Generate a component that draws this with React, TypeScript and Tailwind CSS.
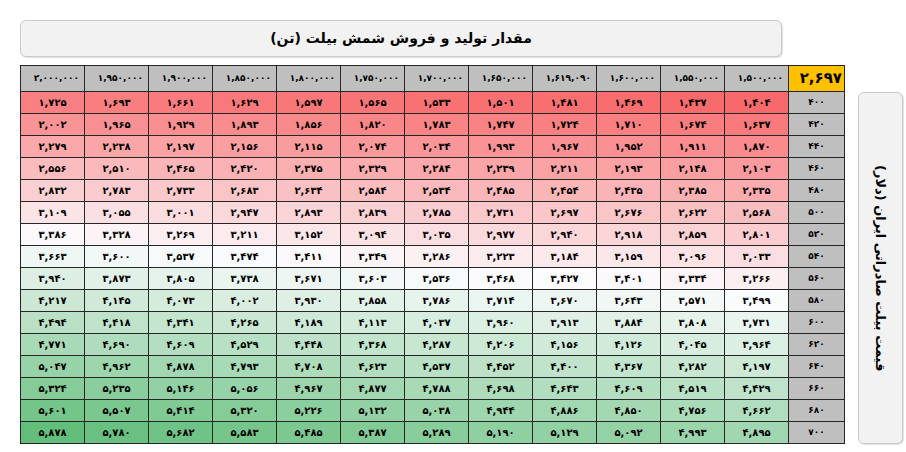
const FONT = "font-['DejaVu_Sans',sans-serif]";

// column prices, right to left (first column sits next to the row header)
const prices = [
  1500000, 1550000, 1600000, 1619090, 1650000, 1700000, 1750000, 1800000, 1850000, 1900000, 1950000,
  2000000,
];

// rows: export price (dollar) -> values in the same order as prices
const rows: Array<{ usd: number; values: number[] }> = [
  { usd: 400, values: [1404, 1437, 1469, 1481, 1501, 1533, 1565, 1597, 1629, 1661, 1693, 1725] },
  { usd: 420, values: [1637, 1674, 1710, 1724, 1747, 1783, 1820, 1856, 1893, 1929, 1965, 2002] },
  { usd: 440, values: [1870, 1911, 1952, 1967, 1993, 2034, 2074, 2115, 2156, 2197, 2238, 2279] },
  { usd: 460, values: [2103, 2148, 2193, 2211, 2239, 2284, 2329, 2375, 2420, 2465, 2510, 2556] },
  { usd: 480, values: [2335, 2385, 2435, 2454, 2485, 2534, 2584, 2634, 2683, 2733, 2783, 2832] },
  { usd: 500, values: [2568, 2622, 2676, 2697, 2731, 2785, 2839, 2893, 2947, 3001, 3055, 3109] },
  { usd: 520, values: [2801, 2859, 2918, 2940, 2977, 3035, 3094, 3152, 3211, 3269, 3328, 3386] },
  { usd: 540, values: [3033, 3096, 3159, 3184, 3223, 3286, 3349, 3411, 3474, 3537, 3600, 3663] },
  { usd: 560, values: [3266, 3334, 3401, 3427, 3468, 3536, 3603, 3671, 3738, 3805, 3873, 3940] },
  { usd: 580, values: [3499, 3571, 3643, 3670, 3714, 3786, 3858, 3930, 4002, 4073, 4145, 4217] },
  { usd: 600, values: [3731, 3808, 3884, 3913, 3960, 4037, 4113, 4189, 4265, 4341, 4418, 4494] },
  { usd: 620, values: [3964, 4045, 4126, 4156, 4206, 4287, 4368, 4448, 4529, 4609, 4690, 4771] },
  { usd: 640, values: [4197, 4282, 4367, 4400, 4452, 4537, 4623, 4708, 4793, 4878, 4962, 5047] },
  { usd: 660, values: [4429, 4519, 4609, 4643, 4698, 4788, 4877, 4967, 5056, 5146, 5235, 5324] },
  { usd: 680, values: [4662, 4756, 4850, 4886, 4944, 5038, 5132, 5226, 5320, 5414, 5507, 5601] },
  { usd: 700, values: [4895, 4993, 5092, 5129, 5190, 5289, 5387, 5485, 5583, 5682, 5780, 5878] },
];

const faDigits = "۰۱۲۳۴۵۶۷۸۹";

// Format number with commas and persian digits
const toFa = (value: number) =>
  value
    .toLocaleString("en-US")
    .replace(/[0-9]/g, (d) => faDigits[Number(d)]);

// 3-colour scale: red (min) -> white (median) -> green (max)
const all = rows.flatMap((r) => r.values).sort((a, b) => a - b);
const min = all[0];
const max = all[all.length - 1];
const mid = (() => {
  const pos = (all.length - 1) * 0.5;
  const lo = Math.floor(pos);
  return all[lo] + (all[Math.ceil(pos)] - all[lo]) * (pos - lo);
})();

const RED = [248, 105, 107];
const WHITE = [252, 252, 255];
const GREEN = [99, 190, 123];

const mix = (a: number[], b: number[], t: number) =>
  `rgb(${a.map((v, i) => Math.round(v + (b[i] - v) * t)).join(",")})`;

const cellColor = (value: number) =>
  value <= mid ? mix(RED, WHITE, (value - min) / (mid - min)) : mix(WHITE, GREEN, (value - mid) / (max - mid));

export default function App() {
  return (
    <div className={`min-h-[452px] w-[906px] bg-white pl-5 pt-5 text-black ${FONT}`} dir="ltr">
      <div className="flex items-end">
        <div className="flex flex-col gap-2">
          {/* Title */}
          <div
            className="flex h-[37px] w-[762px] items-center justify-center rounded-md border border-[#c9c9c9] bg-[#f2f2f2] shadow-[1px_1px_1px_rgba(0,0,0,0.12)]"
            dir="rtl"
          >
            <span className="text-[14px] font-bold">مقدار تولید و فروش شمش بیلت (تن)</span>
          </div>

          {/* Table */}
          <div
            className="grid w-[825px] grid-cols-[55px_repeat(12,63px)] grid-rows-[25px_repeat(16,21px)] gap-px border border-[#262626] bg-[#262626]"
            dir="rtl"
          >
            <div className="flex items-center justify-start bg-[#ffc000] pr-0.5 text-[15px] font-bold">
              {toFa(2697)}
            </div>
            {prices.map((p) => (
              <div key={p} className="flex items-center justify-start bg-[#bfbfbf] pr-[5px] text-[9px] font-bold">
                {toFa(p)}
              </div>
            ))}
            {rows.map((r) => (
              <Row key={r.usd} usd={r.usd} values={r.values} />
            ))}
          </div>
        </div>

        {/* Side label */}
        <div className="ml-[13px] flex h-[352px] w-[45px] items-center justify-center rounded-md border border-[#c9c9c9] bg-[#f2f2f2] shadow-[1px_1px_1px_rgba(0,0,0,0.12)]">
          <span className="text-[13px] font-bold [writing-mode:vertical-rl]" dir="rtl">
            قیمت بیلت صادراتی ایران (دلار)
          </span>
        </div>
      </div>
    </div>
  );
}

function Row({ usd, values }: { usd: number; values: number[] }) {
  return (
    <>
      <div className="flex items-center justify-center bg-[#bfbfbf] text-[9px] font-bold">{toFa(usd)}</div>
      {values.map((v, i) => (
        <div
          key={i}
          className="flex items-center justify-center text-[10px] font-bold"
          style={{ backgroundColor: cellColor(v) }}
        >
          {toFa(v)}
        </div>
      ))}
    </>
  );
}
